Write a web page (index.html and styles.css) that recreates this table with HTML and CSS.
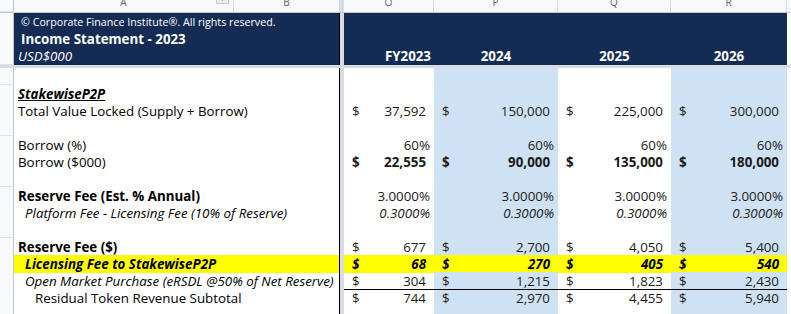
FILE: index.html
```html
<!DOCTYPE html>
<html>
<head>
<meta charset="utf-8">
<title>Income Statement - 2023</title>
<link rel="stylesheet" href="styles.css">
</head>
<body>

<div class="sheet">

	<div class="row colhead">
		<div class="rh corner"></div>
		<div class="ch">A<span class="filter"><svg width="9" height="4" viewBox="0 0 9 4"><polygon points="0,0 9,0 4.5,4" fill="#9aa0a6"/></svg></span></div>
		<div class="ch">B</div>
		<div class="band"></div>
		<div class="ch">O</div>
		<div class="ch">P</div>
		<div class="ch">Q</div>
		<div class="ch">R</div>
		<div class="ch last"></div>
	</div>

	<div class="row navy">
		<div class="rh"></div>
		<div class="a small">&copy; Corporate Finance Institute&reg;. All rights reserved.</div>
		<div class="b"></div>
		<div class="band"></div>
		<div></div><div></div><div></div><div></div>
		<div class="tail"></div>
	</div>
	<div class="row navy">
		<div class="rh"></div>
		<div class="a title">Income Statement - 2023</div>
		<div class="b"></div>
		<div class="band"></div>
		<div></div><div></div><div></div><div></div>
		<div class="tail"></div>
	</div>
	<div class="row navy">
		<div class="rh"></div>
		<div class="a it">USD$000</div>
		<div class="b"></div>
		<div class="band"></div>
		<div class="yr right">FY2023</div>
		<div class="yr">2024</div>
		<div class="yr">2025</div>
		<div class="yr">2026</div>
		<div class="tail"></div>
	</div>

	<div class="freeze"></div>

	<div class="row">
		<div class="rh"></div>
		<div class="a"></div><div class="b"></div><div class="band"></div>
		<div></div><div class="blue"></div><div></div><div class="blue"></div><div></div>
	</div>

	<div class="row">
		<div class="rh"></div>
		<div class="a bold it ul">StakewiseP2P</div><div class="b"></div><div class="band"></div>
		<div></div><div class="blue"></div><div></div><div class="blue"></div><div></div>
	</div>

	<div class="row">
		<div class="rh"></div>
		<div class="a">Total Value Locked (Supply + Borrow)</div><div class="b"></div><div class="band"></div>
		<div class="acc"><span>$</span><span>37,592</span></div>
		<div class="acc blue"><span>$</span><span>150,000</span></div>
		<div class="acc"><span>$</span><span>225,000</span></div>
		<div class="acc blue"><span>$</span><span>300,000</span></div>
		<div></div>
	</div>

	<div class="row">
		<div class="rh"></div>
		<div class="a"></div><div class="b"></div><div class="band"></div>
		<div></div><div class="blue"></div><div></div><div class="blue"></div><div></div>
	</div>

	<div class="row">
		<div class="rh"></div>
		<div class="a">Borrow (%)</div><div class="b"></div><div class="band"></div>
		<div class="pct">60%</div>
		<div class="pct blue">60%</div>
		<div class="pct">60%</div>
		<div class="pct blue">60%</div>
		<div></div>
	</div>

	<div class="row">
		<div class="rh"></div>
		<div class="a">Borrow ($000)</div><div class="b"></div><div class="band"></div>
		<div class="acc bold"><span>$</span><span>22,555</span></div>
		<div class="acc bold blue"><span>$</span><span>90,000</span></div>
		<div class="acc bold"><span>$</span><span>135,000</span></div>
		<div class="acc bold blue"><span>$</span><span>180,000</span></div>
		<div></div>
	</div>

	<div class="row">
		<div class="rh"></div>
		<div class="a"></div><div class="b"></div><div class="band"></div>
		<div></div><div class="blue"></div><div></div><div class="blue"></div><div></div>
	</div>

	<div class="row">
		<div class="rh"></div>
		<div class="a bold">Reserve Fee (Est. % Annual)</div><div class="b"></div><div class="band"></div>
		<div class="pct">3.0000%</div>
		<div class="pct blue">3.0000%</div>
		<div class="pct">3.0000%</div>
		<div class="pct blue">3.0000%</div>
		<div></div>
	</div>

	<div class="row">
		<div class="rh"></div>
		<div class="a it indent">Platform Fee - Licensing Fee (10% of Reserve)</div><div class="b"></div><div class="band"></div>
		<div class="pct it">0.3000%</div>
		<div class="pct it blue">0.3000%</div>
		<div class="pct it">0.3000%</div>
		<div class="pct it blue">0.3000%</div>
		<div></div>
	</div>

	<div class="row">
		<div class="rh"></div>
		<div class="a"></div><div class="b"></div><div class="band"></div>
		<div></div><div class="blue"></div><div></div><div class="blue"></div><div></div>
	</div>

	<div class="row">
		<div class="rh"></div>
		<div class="a bold">Reserve Fee ($)</div><div class="b"></div><div class="band"></div>
		<div class="acc"><span>$</span><span>677</span></div>
		<div class="acc blue"><span>$</span><span>2,700</span></div>
		<div class="acc"><span>$</span><span>4,050</span></div>
		<div class="acc blue"><span>$</span><span>5,400</span></div>
		<div></div>
	</div>

	<div class="row hl">
		<div class="rh"></div>
		<div class="a bold it indent">Licensing Fee to StakewiseP2P</div><div class="b"></div><div class="band"></div>
		<div class="acc bold it"><span>$</span><span>68</span></div>
		<div class="acc bold it"><span>$</span><span>270</span></div>
		<div class="acc bold it"><span>$</span><span>405</span></div>
		<div class="acc bold it"><span>$</span><span>540</span></div>
		<div></div>
	</div>

	<div class="row">
		<div class="rh"></div>
		<div class="a it indent">Open Market Purchase (eRSDL @50% of Net Reserve)</div><div class="b"></div><div class="band"></div>
		<div class="acc"><span>$</span><span>304</span></div>
		<div class="acc blue"><span>$</span><span>1,215</span></div>
		<div class="acc"><span>$</span><span>1,823</span></div>
		<div class="acc blue"><span>$</span><span>2,430</span></div>
		<div></div>
	</div>

	<div class="row total">
		<div class="rh"></div>
		<div class="a indent2">Residual Token Revenue Subtotal</div><div class="b"></div><div class="band"></div>
		<div class="acc"><span>$</span><span>744</span></div>
		<div class="acc blue"><span>$</span><span>2,970</span></div>
		<div class="acc"><span>$</span><span>4,455</span></div>
		<div class="acc blue"><span>$</span><span>5,940</span></div>
		<div></div>
	</div>

	<div class="row">
		<div class="rh"></div>
		<div class="a"></div><div class="b"></div><div class="band"></div>
		<div></div><div class="blue"></div><div></div><div class="blue"></div><div></div>
	</div>

</div>

</body>
</html>
```

FILE: styles.css
```css
body {
	margin : 0;
	background-color : #fff;
	font-family : "Open Sans", sans-serif;
	font-size : 13.33px;
	color : #1a1a1a;
}

.sheet {
	width : 791px;
	height : 314px;
	overflow : hidden;
}

.row {
	display : grid;
	grid-template-columns : 14px 220px 106px 4px 90px 124px 113px 116px 1fr;
	height : 17px;
	line-height : 17px;
	white-space : nowrap;
}

.row > div {
	box-sizing : border-box;
}

.row:not(.colhead) > div {
	padding-top : 1px;
}

/* column letters */

.colhead {
	height : 13px;
	background-color : #f8f9fa;
	border-bottom : 1px solid #c4c7c5;
	box-sizing : border-box;
	overflow : hidden;
}

.ch {
	position : relative;
	text-align : center;
	font-size : 10px;
	line-height : 12px;
	color : #5f6368;
	border-right : 1px solid #d7d9dc;
	margin-top : -4px;
	padding-top : 0;
}

.ch.last {
	border-right : none;
}

.filter {
	position : absolute;
	right : 4px;
	top : -3px;
	width : 13px;
	height : 11px;
	border : 1px solid #c8cacd;
	background-color : #eceef0;
	box-sizing : border-box;
	display : flex;
	justify-content : center;
	align-items : flex-end;
	padding-bottom : 2px;
}

.filter svg {
	display : block;
}

.corner {
	border-right : 2px solid #c4c7c5;
}

/* row numbers */

.rh {
	background-color : #f8f9fa;
	border-right : 1px solid #c4c7c5;
	border-bottom : 1px solid #e1e3e6;
}

.band {
	background-color : #d9dde3;
}

.freeze {
	height : 4px;
	background-color : #d9dde3;
}

.b {
	border-right : 1px solid #000;
}

/* navy title block */

.navy > div {
	background-color : #142c54;
	color : #fff;
}

.navy > .rh {
	background-color : #f8f9fa;
}

.navy > .band {
	background-color : #d9dde3;
}

.navy > .tail {
	background-color : #fff;
}

.navy .small {
	font-size : 10.7px;
	padding-left : 7px;
}

.navy .title {
	font-weight : bold;
	padding-left : 7px;
}

.yr {
	font-weight : bold;
	text-align : center;
}

.yr.right {
	text-align : right;
	padding-right : 3px;
}

/* labels */

.a {
	position : relative;
	z-index : 1;
	padding-left : 4px;
	overflow : visible;
	color : #000;
}

.a.indent {
	padding-left : 11px;
}

.a.indent2 {
	padding-left : 21px;
}

.bold {
	font-weight : bold;
}

.it {
	font-style : italic;
}

.ul {
	text-decoration : underline;
}

/* values */

.blue {
	background-color : #cfe2f3;
}

.acc {
	display : flex;
	justify-content : space-between;
	padding : 0 8px 0 8px;
}

.pct {
	text-align : right;
	padding-right : 4px;
}

.hl > div:not(.rh):not(.band):not(:last-child) {
	background-color : #ffff00;
	color : #000;
}

.total > .acc {
	box-shadow : inset 0 1px 0 #000;
}
```
